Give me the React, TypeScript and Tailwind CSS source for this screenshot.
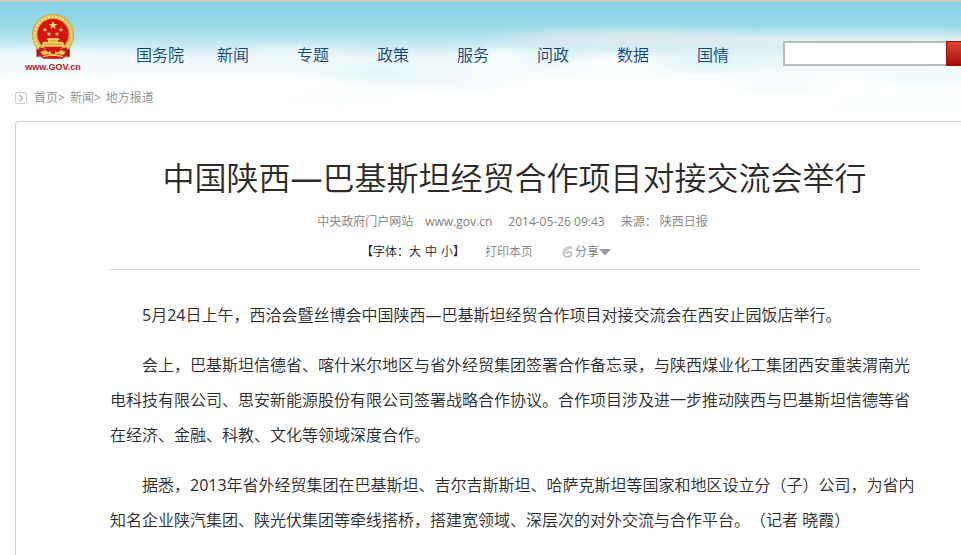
import React, { useState } from 'react';

const navItems = ['新闻', '专题', '政策', '服务', '问政', '数据', '国情'];

const crumbs = ['首页', '新闻', '地方报道'];

const fontSizes = ['大', '中', '小'];

const paragraphs = [
  '5月24日上午，西洽会暨丝博会中国陕西—巴基斯坦经贸合作项目对接交流会在西安止园饭店举行。',
  '会上，巴基斯坦信德省、喀什米尔地区与省外经贸集团签署合作备忘录，与陕西煤业化工集团西安重装渭南光电科技有限公司、思安新能源股份有限公司签署战略合作协议。合作项目涉及进一步推动陕西与巴基斯坦信德等省在经济、金融、科教、文化等领域深度合作。',
  '据悉，2013年省外经贸集团在巴基斯坦、吉尔吉斯斯坦、哈萨克斯坦等国家和地区设立分（子）公司，为省内知名企业陕汽集团、陕光伏集团等牵线搭桥，搭建宽领域、深层次的对外交流与合作平台。（记者 晓霞）',
];

const star = '0,-10 2.4,-3.1 9.5,-3.1 3.8,1.2 5.9,8.1 0,4 -5.9,8.1 -3.8,1.2 -9.5,-3.1 -2.4,-3.1';

function Sky() {
  return (
    <svg className="absolute inset-0 h-full w-full" viewBox="0 0 961 120" preserveAspectRatio="none" aria-hidden="true">
      <defs>
        <linearGradient id="sky" x1="0" y1="0" x2="0" y2="1">
          <stop offset="0" stopColor="#86d0e4" />
          <stop offset="0.2" stopColor="#99dbe8" />
          <stop offset="0.33" stopColor="#bfe7f1" />
          <stop offset="0.48" stopColor="#edf8fb" />
          <stop offset="0.68" stopColor="#ffffff" />
        </linearGradient>
        <filter id="soft" x="-20%" y="-60%" width="140%" height="220%">
          <feGaussianBlur stdDeviation="22 5" />
        </filter>
      </defs>
      <rect width="961" height="120" fill="url(#sky)" />
      <g filter="url(#soft)">
        <ellipse cx="640" cy="37" rx="130" ry="7" fill="#e3e9ef" />
        <ellipse cx="860" cy="40" rx="170" ry="8" fill="#e6eff4" />
        <ellipse cx="40" cy="58" rx="110" ry="9" fill="#f4fbfd" />
        <ellipse cx="290" cy="52" rx="40" ry="6" fill="#f5fbfd" />
        <ellipse cx="510" cy="56" rx="45" ry="8" fill="#ffffff" />
        <ellipse cx="620" cy="62" rx="50" ry="8" fill="#ffffff" />
        <ellipse cx="380" cy="70" rx="60" ry="6" fill="#e0f5f9" />
        <ellipse cx="430" cy="81" rx="90" ry="4" fill="#eaf6f9" />
        <ellipse cx="550" cy="55" rx="25" ry="6" fill="#d3f1f6" />
        <ellipse cx="710" cy="60" rx="50" ry="6" fill="#d9f3f8" />
        <ellipse cx="780" cy="84" rx="40" ry="5" fill="#ecf9fb" />
        <ellipse cx="930" cy="78" rx="50" ry="6" fill="#e8fafb" />
        <ellipse cx="340" cy="98" rx="50" ry="5" fill="#f6fafc" />
        <ellipse cx="900" cy="105" rx="70" ry="7" fill="#f8fdfd" />
      </g>
    </svg>
  );
}

function Emblem() {
  return (
    <svg className="h-12 w-11" viewBox="32 16 132 144" aria-hidden="true">
      <ellipse cx="104" cy="148" rx="48" ry="6" fill="#8aa9b2" opacity="0.4" />
      <path d="M50 112c-2 12-2 24-1 36 8-3 14-3 20 5h58c6-8 12-8 20-5 2-12 1-24-1-36z" fill="#cf1a14" />
      <circle cx="98" cy="82" r="63" fill="#e3bc4e" />
      <circle cx="98" cy="82" r="62" fill="none" stroke="#b98a25" strokeWidth="2" strokeDasharray="5 4" />
      <circle cx="98" cy="82" r="55" fill="none" stroke="#f8e69a" strokeWidth="6" strokeDasharray="6 5" />
      <circle cx="98" cy="80" r="47" fill="#d8120f" />
      <g fill="#fbe37b">
        <polygon points={star} transform="translate(98 53) scale(1.4)" />
        <polygon points={star} transform="translate(74 66) scale(.75)" />
        <polygon points={star} transform="translate(122 66) scale(.75)" />
        <polygon points={star} transform="translate(86 79) scale(.75)" />
        <polygon points={star} transform="translate(110 79) scale(.75)" />
      </g>
      <path d="M82 91h32l4 6h-5v5h14l4 6v9H65v-9l4-6h14v-5h-5z" fill="#f0cd60" />
      <path d="M88 99h20M70 110h56" stroke="#c98a24" strokeWidth="2" />
      <path d="M57 119c20 8 62 8 82 0l4 14c-24 12-66 12-90 0z" fill="#c91712" />
      <path d="M60 133l14-6 10 7 14-7 14 7 10-7 14 6-8 9-14-4-16 6-16-6-14 4z" fill="#f0cd60" />
      <circle cx="98" cy="133" r="7" fill="#d8120f" />
      <path d="M68 147q30-10 60 0" fill="none" stroke="#f0cd60" strokeWidth="4" />
      <path d="M52 126v20M145 126v20" stroke="#9c0f0c" strokeWidth="4" />
    </svg>
  );
}

function Header() {
  const [query, setQuery] = useState('');

  return (
    <div className="relative border-t-2 border-[#cfc8c6]">
      <Sky />
      <header className="relative flex h-20">
        <a href="#" className="ml-6 mt-[11px] flex w-[58px] shrink-0 flex-col items-center">
          <Emblem />
          <span className="font-['Liberation_Sans',sans-serif] text-[9px] font-bold leading-3 text-[#b3161c]">www.GOV.cn</span>
        </a>
        <nav className="ml-[54px] mt-[41px] shrink-0">
          <ul className="flex text-base leading-6 text-[#0f4484]">
            <li className="w-[81px]">
              <a href="#">国务院</a>
            </li>
            {navItems.map((item) => (
              <li key={item} className="w-20">
                <a href="#">{item}</a>
              </li>
            ))}
          </ul>
        </nav>
        <form className="ml-[6px] mt-[39px] flex h-[25px] shrink-0" onSubmit={(e) => e.preventDefault()}>
          <input
            type="text"
            aria-label="搜索"
            value={query}
            onChange={(e) => setQuery(e.target.value)}
            className="w-[163px] border-2 border-r-0 border-[#b6babd] bg-white px-2 text-sm outline-none"
          />
          <button
            type="submit"
            aria-label="搜索"
            className="w-12 border border-[#a30d0a] bg-linear-to-b from-[#d8442f] to-[#ab0505]"
          />
        </form>
      </header>
      <div className="relative ml-[15px] flex h-[39px] items-center pb-[7px] text-xs text-[#8c8c8c]">
        <svg className="mr-[7px] h-3 w-3" viewBox="0 0 12 12" fill="none" aria-hidden="true">
          <rect x="0.5" y="0.5" width="11" height="11" rx="1" fill="#fcfcfc" stroke="#cfcfcf" />
          <path d="M4.5 3L7.5 6L4.5 9" stroke="#b5b5b5" strokeWidth="1.5" />
        </svg>
        {crumbs.map((crumb, i) => (
          <span key={crumb} className="mr-[5px]">
            <a href="#">{crumb}</a>
            {i < crumbs.length - 1 && '>'}
          </span>
        ))}
      </div>
    </div>
  );
}

function ArticleMeta() {
  return (
    <div className="border-b border-[#d4d4d4] pb-[2px] text-xs leading-[30px] text-[#808080]">
      <div className="flex justify-center pr-1">
        <span className="mr-3">中央政府门户网站</span>
        <a href="#" className="mr-4">www.gov.cn</a>
        <span className="mr-4">2014-05-26 09:43</span>
        <span>来源： 陕西日报</span>
      </div>
      <div className="ml-[251px] flex items-center">
        <div className="mr-5 flex text-[#222222]">
          <span>【字体：</span>
          <span className="flex gap-1">
            {fontSizes.map((size) => (
              <button key={size} type="button">{size}</button>
            ))}
          </span>
          <span>】</span>
        </div>
        <button type="button" className="mr-[29px]">打印本页</button>
        <button type="button" className="flex items-center">
          <svg className="mr-[2px] h-3 w-[11px]" viewBox="0 0 11 12" fill="none" aria-hidden="true">
            <path d="M10.2 1.6C6.5.3 1.8 2.3 1.4 6.6c-.2 3 2 4.6 4.3 4.4 2-.1 3.6-1.3 3.7-3 .1-1.6-1.3-2.5-2.7-2.2-1.2.2-1.9 1.1-1.7 2.2" stroke="#bdbdbd" strokeWidth="1.7" />
            <path d="M1 6.5C1 1.5 6.5-.3 10.4.8L9.8 3C6.5 2.5 4.5 3.5 3 8z" fill="#cdcdcd" />
          </svg>
          分享
          <svg className="h-[7px] w-3" viewBox="0 0 12 7" aria-hidden="true">
            <path d="M0 0h12L6 6.5z" fill="#9a9a9a" />
          </svg>
        </button>
      </div>
    </div>
  );
}

function App() {
  return (
    <div className="min-h-screen overflow-x-hidden bg-white font-['Open_Sans','Noto_Sans_CJK_SC_DemiLight','Noto_Sans_CJK_SC',sans-serif] [text-spacing-trim:space-all]">
      <Header />
      <main className="ml-[15px] rounded-tl-sm border-l border-t border-[#cfd3d5] bg-white pl-[94px] pr-[42px] pt-9">
        <article>
          <h1 className="mb-[9px] text-center text-[32px] leading-[40px] text-[#2b2b2b]">
            中国陕西—巴基斯坦经贸合作项目对接交流会举行
          </h1>
          <ArticleMeta />
          <div className="mt-7 space-y-[15px] pb-5 text-base leading-[35px] text-[#2b2b2b]">
            {paragraphs.map((text) => (
              <p key={text} className="indent-8">{text}</p>
            ))}
          </div>
        </article>
      </main>
    </div>
  );
}

export default App;
